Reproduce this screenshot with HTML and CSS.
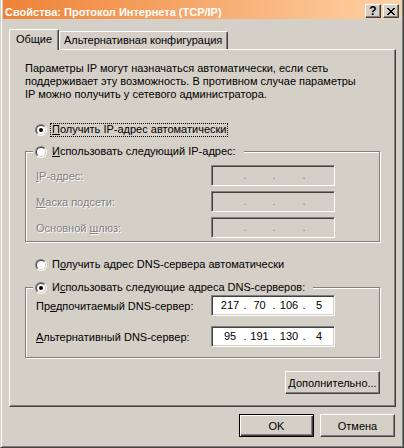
FILE: index.html
```html
<!DOCTYPE html>
<html>
<head>
  <meta charset="utf-8">
  <title>Свойства: Протокол Интернета (TCP/IP)</title>
  <link rel="stylesheet" href="styles.css">
</head>
<body>
  <div class="window">
    <div class="titlebar">
      <span class="title">Свойства: Протокол Интернета (TCP/IP)</span>
      <div class="caption-buttons">
        <span class="caption-btn help">?</span>
        <span class="caption-btn">
          <svg width="8" height="7" viewBox="0 0 8 7"><path d="M0 0h2v1H0zM6 0h2v1H6zM1 1h2v1H1zM5 1h2v1H5zM2 2h4v1H2zM3 3h2v1H3zM2 4h4v1H2zM1 5h2v1H1zM5 5h2v1H5zM0 6h2v1H0zM6 6h2v1H6z" fill="#000"/></svg>
        </span>
      </div>
    </div>

    <div class="tabs">
      <div class="tab active">Общие</div>
      <div class="tab">Альтернативная конфигурация</div>
    </div>

    <div class="panel">
      <p class="intro">Параметры IP могут назначаться автоматически, если сеть<br>поддерживает эту возможность. В противном случае параметры<br>IP можно получить у сетевого администратора.</p>

      <div class="option option-ip">
        <span class="radio checked"></span>
        <span class="caption focused"><u>П</u>олучить IP-адрес автоматически</span>
      </div>

      <div class="group group-ip">
        <div class="legend">
          <span class="radio"></span>
          <span class="caption"><u>И</u>спользовать следующий IP-адрес:</span>
        </div>
        <div class="row">
          <span class="label disabled"><u>I</u>P-адрес:</span>
          <div class="ip-field off"><span></span><i>.</i><span></span><i>.</i><span></span><i>.</i><span></span></div>
        </div>
        <div class="row">
          <span class="label disabled"><u>М</u>аска подсети:</span>
          <div class="ip-field off"><span></span><i>.</i><span></span><i>.</i><span></span><i>.</i><span></span></div>
        </div>
        <div class="row">
          <span class="label disabled">Основной <u>ш</u>люз:</span>
          <div class="ip-field off"><span></span><i>.</i><span></span><i>.</i><span></span><i>.</i><span></span></div>
        </div>
      </div>

      <div class="option option-dns">
        <span class="radio"></span>
        <span class="caption">П<u>о</u>лучить адрес DNS-сервера автоматически</span>
      </div>

      <div class="group group-dns">
        <div class="legend">
          <span class="radio checked"></span>
          <span class="caption">И<u>с</u>пользовать следующие адреса DNS-серверов:</span>
        </div>
        <div class="row">
          <span class="label">Пр<u>е</u>дпочитаемый DNS-сервер:</span>
          <div class="ip-field"><span>217</span><i>.</i><span>70</span><i>.</i><span>106</span><i>.</i><span>5</span></div>
        </div>
        <div class="row">
          <span class="label"><u>А</u>льтернативный DNS-сервер:</span>
          <div class="ip-field"><span>95</span><i>.</i><span>191</span><i>.</i><span>130</span><i>.</i><span>4</span></div>
        </div>
      </div>

      <div class="panel-actions">
        <button class="btn wide"><u>Д</u>ополнительно...</button>
      </div>
    </div>

    <div class="footer">
      <button class="btn default">OK</button>
      <button class="btn">Отмена</button>
    </div>
  </div>
</body>
</html>
```

FILE: styles.css
```css
body {
  margin: 0;
  background: #d4d0c8;
  font-family: "Liberation Sans", Arial, sans-serif;
  font-size: 11px;
  color: #000;
}

.window {
  width: 404px;
  height: 448px;
  box-sizing: border-box;
  padding: 0 2px;
  border-left: 1px solid #d4d0c8;
  border-right: 1px solid #404040;
  border-bottom: 1px solid #404040;
  box-shadow: inset 1px 0 #fff, inset -1px -1px #808080;
  display: flex;
  flex-direction: column;
}

/* title bar */
.titlebar {
  height: 19px;
  display: flex;
  justify-content: space-between;
  padding: 0 2px 0 2px;
  background: linear-gradient(to right, #ee8236, #ffd2a6);
}

.title {
  color: #fff;
  font-weight: bold;
  line-height: 13px;
  margin-top: 6px;
  white-space: nowrap;
}

.caption-buttons {
  display: flex;
  gap: 2px;
  margin-top: 4px;
}

.caption-btn {
  width: 16px;
  height: 14px;
  box-sizing: border-box;
  background: #d4d0c8;
  border: 1px solid;
  border-color: #fff #404040 #404040 #fff;
  box-shadow: inset -1px -1px #808080;
  display: flex;
  align-items: center;
  justify-content: center;
}

.caption-btn.help {
  font-weight: bold;
  font-size: 12px;
  line-height: 12px;
}

/* tabs */
.tabs {
  display: flex;
  align-items: flex-end;
  height: 20px;
  margin-top: 10px;
  padding-left: 6px;
}

.tab {
  box-sizing: border-box;
  height: 18px;
  padding: 2px 5px 0 4px;
  line-height: 13px;
  border-top: 1px solid #fff;
  border-left: 1px solid #fff;
  border-right: 1px solid #404040;
  border-radius: 2px 2px 0 0;
  box-shadow: inset -1px 0 #808080;
  white-space: nowrap;
}

.tab.active {
  position: relative;
  z-index: 1;
  width: 50px;
  height: 21px;
  margin-bottom: -1px;
  padding: 3px 0 0;
  text-align: center;
  background: #d4d0c8;
}

/* panel */
.panel {
  position: relative;
  width: 387px;
  box-sizing: border-box;
  margin-left: 6px;
  padding: 0 15px 12px 15px;
  border: 1px solid;
  border-color: #fff #404040 #404040 #fff;
  box-shadow: inset -1px -1px #808080;
}

.intro {
  margin: 12px 0 0;
  line-height: 13px;
}

.option {
  display: flex;
  align-items: center;
  height: 16px;
  padding-left: 10px;
  gap: 3px;
}

.option-ip {
  margin-top: 21px;
}

.option-dns {
  margin-top: 15px;
}

.caption {
  line-height: 11px;
  padding: 0 1px 1px;
  border: 1px solid transparent;
  white-space: nowrap;
}

.caption.focused {
  border: 1px dotted #000;
}

.radio {
  position: relative;
  flex: none;
  width: 12px;
  height: 12px;
  box-sizing: border-box;
  border-radius: 50%;
  border: 1px solid;
  border-color: #808080 #fff #fff #808080;
  background: #d4d0c8;
}

.radio::before {
  content: "";
  position: absolute;
  inset: 0;
  border-radius: 50%;
  border: 1px solid;
  border-color: #404040 #d4d0c8 #d4d0c8 #404040;
  background: #fff;
}

.radio.checked::after {
  content: "";
  position: absolute;
  left: 3px;
  top: 3px;
  width: 4px;
  height: 4px;
  border-radius: 50%;
  background: #000;
}

/* group boxes */
.group {
  border: 1px solid #808080;
  box-shadow: inset 1px 1px #fff, 1px 1px #fff;
  padding-bottom: 3px;
}

.group-ip {
  margin-top: 13px;
}

.group-dns {
  margin-top: 14px;
  padding-bottom: 10px;
}

.legend {
  display: flex;
  width: max-content;
  align-items: center;
  gap: 3px;
  height: 16px;
  margin: -8px 0 0 7px;
  padding: 0 6px 0 2px;
  background: #d4d0c8;
}

.row {
  display: flex;
  align-items: center;
  height: 21px;
  margin-top: 5px;
  padding-left: 10px;
}

.group-dns .row {
  margin-top: 10px;
}

.group-dns .row:nth-child(2) {
  margin-top: -1px;
}

.label {
  width: 175px;
  white-space: nowrap;
}

.disabled {
  color: #808080;
  text-shadow: 1px 1px 0 #fff;
}

.ip-field {
  width: 124px;
  height: 21px;
  box-sizing: border-box;
  padding-left: 5px;
  border: 1px solid;
  border-color: #808080 #fff #fff #808080;
  box-shadow: inset 1px 1px #404040, inset -1px -1px #d4d0c8;
  background: #fff;
  display: grid;
  grid-template-columns: 26px 4px 25px 4px 26px 4px 26px;
  align-items: center;
  text-align: center;
  line-height: 13px;
}

.ip-field i {
  font-style: normal;
}

.ip-field.off {
  background: #d4d0c8;
  color: #808080;
}

.panel-actions {
  display: flex;
  justify-content: flex-end;
  margin-top: 13px;
}

/* buttons */
.btn {
  width: 75px;
  height: 23px;
  box-sizing: border-box;
  padding: 0;
  font: inherit;
  color: #000;
  background: #d4d0c8;
  border: 1px solid;
  border-color: #fff #404040 #404040 #fff;
  box-shadow: inset -1px -1px #808080;
}

.btn.wide {
  width: 95px;
}

.btn.default {
  border: 1px solid #000;
  box-shadow: inset 1px 1px #fff, inset -1px -1px #404040, inset -2px -2px #808080;
}

.footer {
  display: flex;
  justify-content: flex-end;
  gap: 6px;
  margin-top: 7px;
  padding-right: 6px;
}
```
